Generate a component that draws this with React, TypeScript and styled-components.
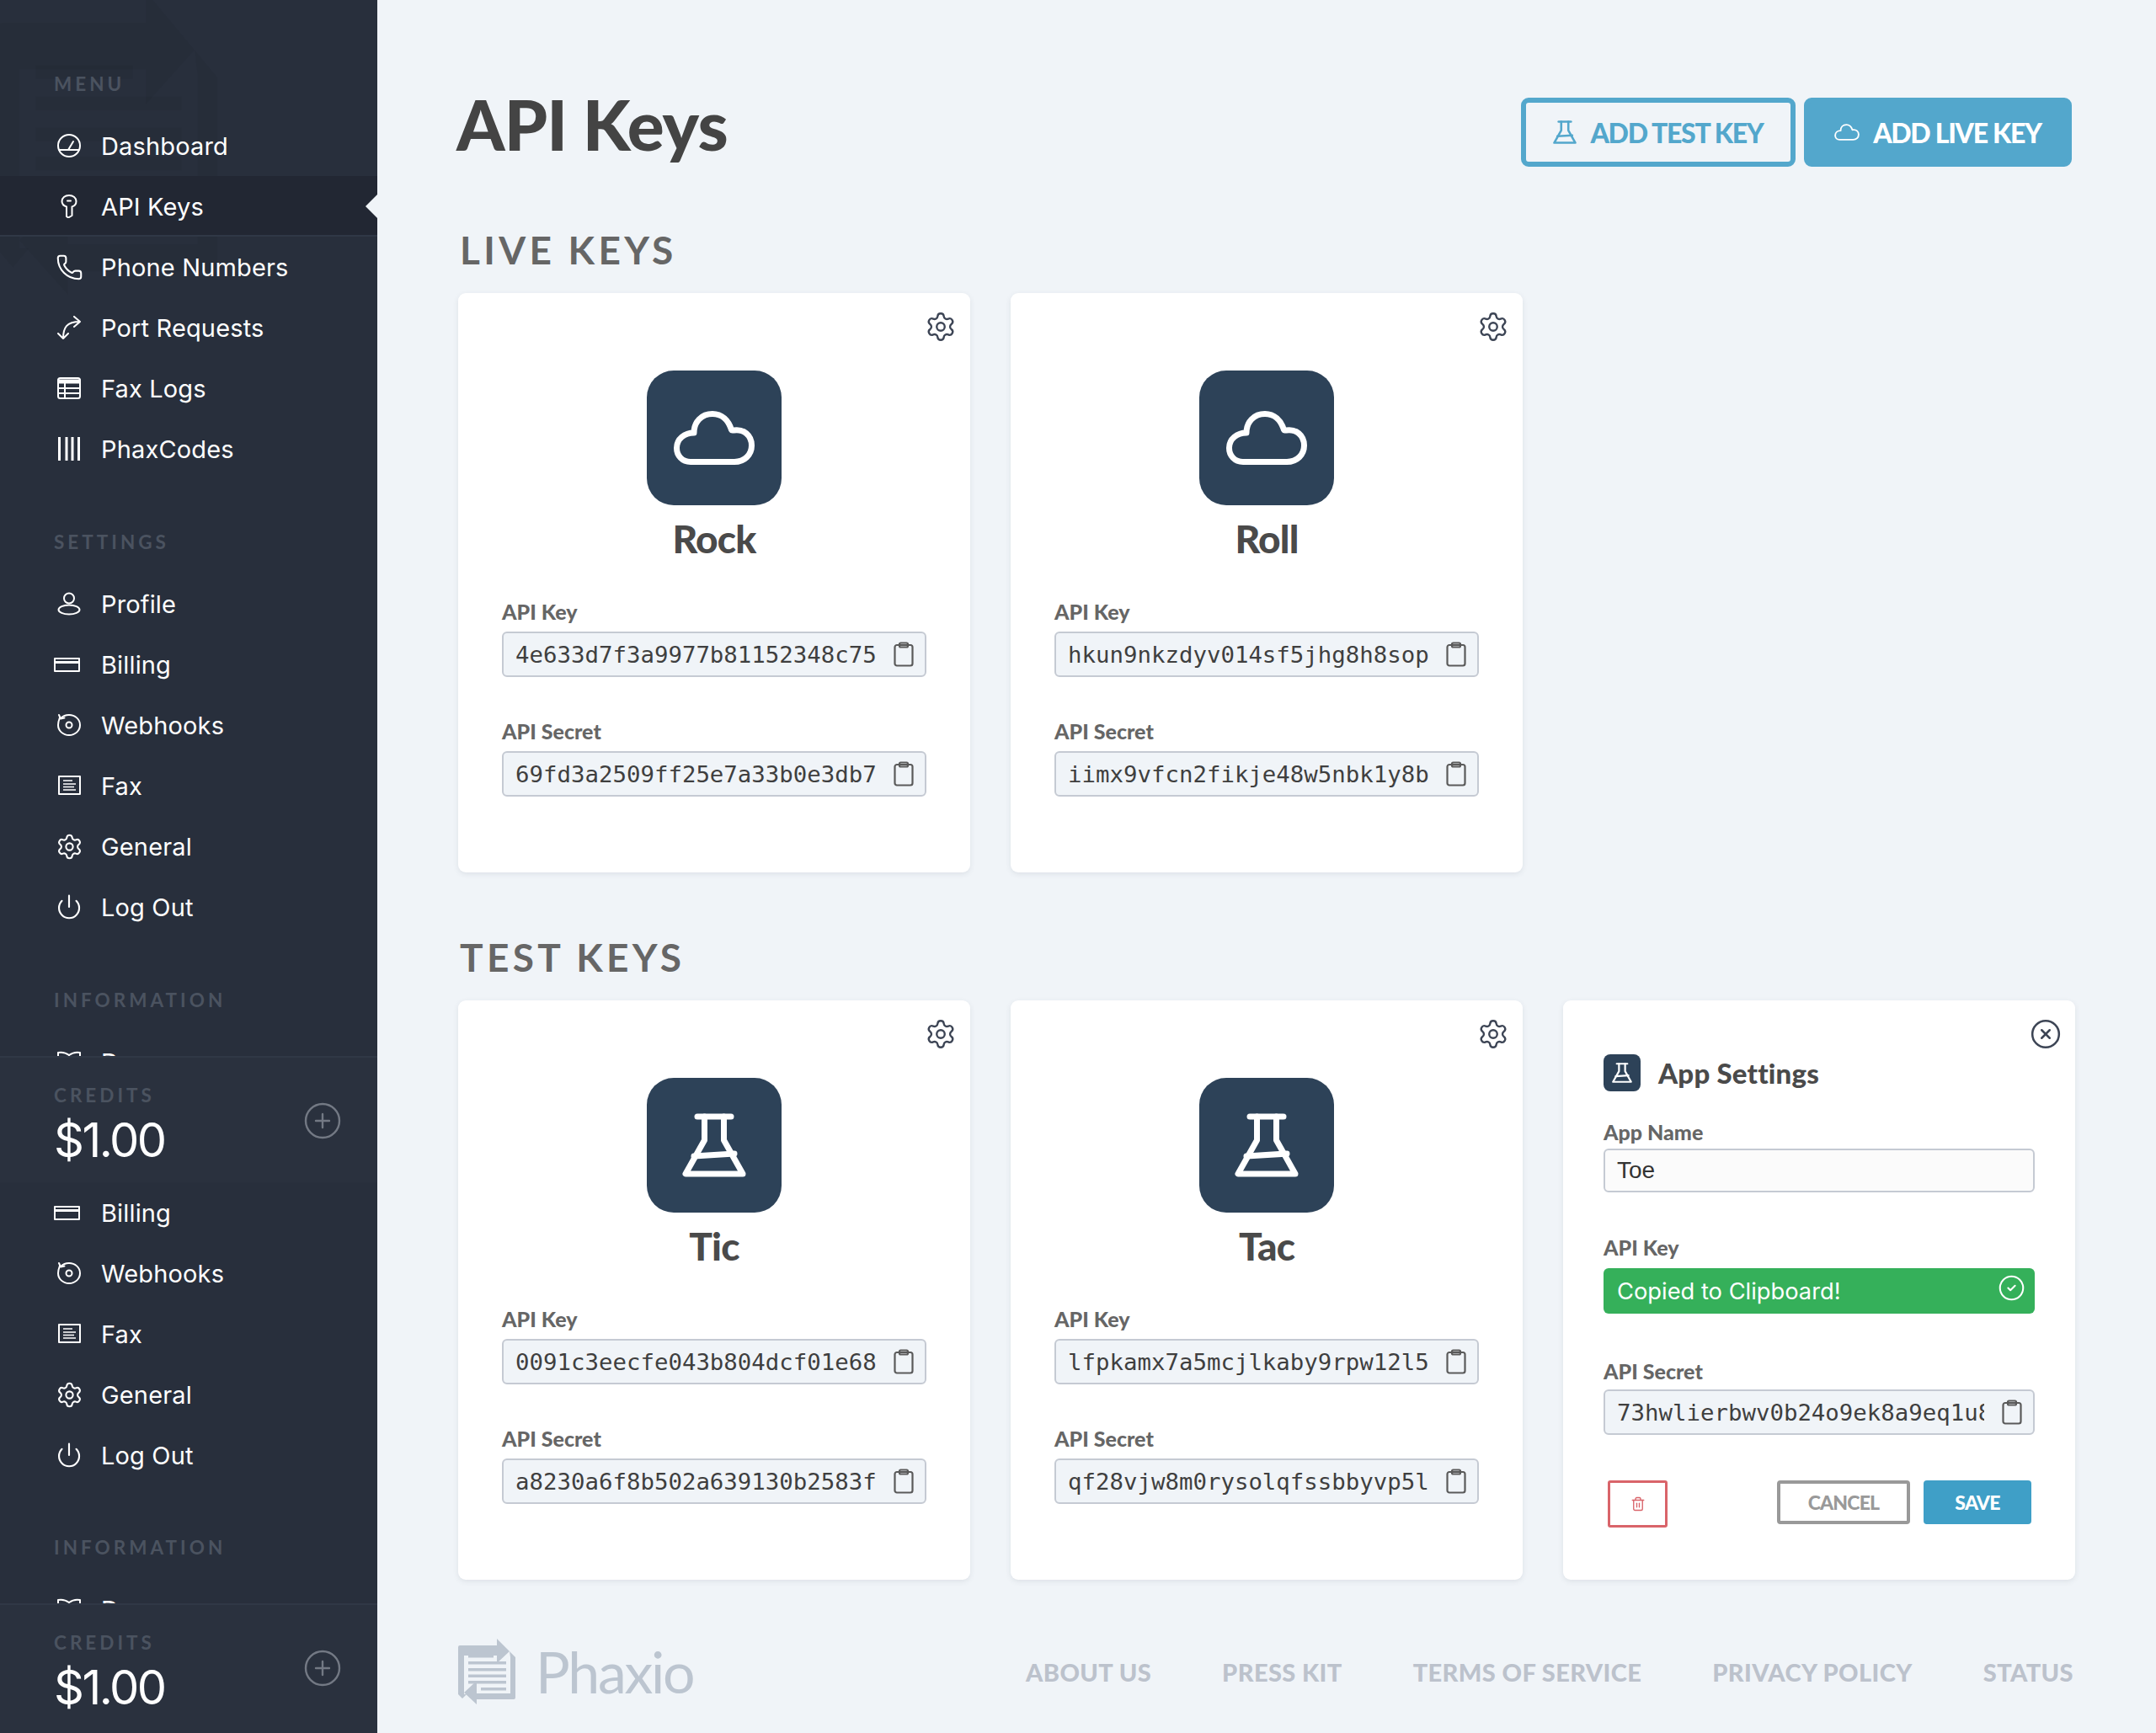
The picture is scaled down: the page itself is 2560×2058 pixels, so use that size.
import React from 'react'
import styled, { createGlobalStyle } from 'styled-components'
import { Settings, Phone, Power, CirclePlus, CircleX, CircleCheck, Trash2 } from 'lucide-react'

const GlobalStyle = createGlobalStyle`
	html, body {
		margin: 0;
		padding: 0;
		background: #f0f4f8;
		overflow: hidden;
	}
	* {
		box-sizing: border-box;
	}
`

const Flask = ({ size }: { size: number }) => (
	<svg width={size} height={size} viewBox="0 0 76 76" fill="none" stroke="currentColor" strokeWidth="7" strokeLinecap="round" strokeLinejoin="round">
		<path d="M18 4h40" />
		<path d="M26.5 4v28L4 72h68L49.5 32V4" />
		<path d="M14 51l48-3" />
	</svg>
)

const Cloud = ({ width, height, stroke = 7 }: { width: number; height: number; stroke?: number }) => (
	<svg width={width} height={height} viewBox="0 0 96 64" fill="none" stroke="currentColor" strokeWidth={stroke} strokeLinejoin="round">
		<path d="M20 60.5h52c12 0 20.500-8.500 20.500-19.500 0-12-9.500-20-21.500-18-1 0-2 .5-2.500-.5C65 11 57 3.500 46 3.500c-13 0-22 9.500-22 22.500-11 0-20.500 7-20.500 18 0 9 6.500 16.500 16.500 16.500z" />
	</svg>
)

const ClipboardIcon = () => (
	<svg width="24" height="30" viewBox="0 0 24 30" fill="none" stroke="#5a5a5a" strokeWidth="2.200" strokeLinejoin="round">
		<rect x="1.500" y="4" width="21" height="24.500" rx="2.500" />
		<rect x="7" y="1.500" width="10" height="5" rx="1.500" />
	</svg>
)

const LogoMark = ({ width, height, color }: { width: number; height: number; color: string }) => (
	<svg width={width} height={height} viewBox="0 0 68 78" preserveAspectRatio="none" fill={color}>
		<path d="M2 8h44V0l15 15-15 14v-9H7v46l3 0-5 5-5-5V10a2 2 0 0 1 2-2z" />
		<path d="M61 15l7 7v48a2 2 0 0 1-2 2H22v6L7 64l15-14v15h40V22z" />
		<rect x="12" y="19" width="30" height="3.500" />
		<rect x="12" y="27" width="45" height="3.500" />
		<rect x="12" y="35" width="45" height="3.500" />
		<rect x="12" y="42.500" width="45" height="3.500" />
		<rect x="12" y="50" width="45" height="3.500" />
		<rect x="27" y="58" width="30" height="3.500" />
	</svg>
)

const navIcon = {
	width: 28,
	height: 28,
	viewBox: '0 0 28 28',
	fill: 'none',
	stroke: 'currentColor',
	strokeWidth: 2,
	strokeLinecap: 'round' as const,
	strokeLinejoin: 'round' as const,
}

const icons: Record<string, React.ReactNode> = {
	dashboard: (
		<svg {...navIcon}>
			<circle cx="14" cy="14" r="13" />
			<path d="M2 19h24M13 19l6-10" />
		</svg>
	),
	key: (
		<svg {...navIcon}>
			<path d="M14 1c5 0 8.500 3 8.500 7 0 3-2 5.500-5 6.500V25l-4.500 2.500-2-1.500V14.500c-3-1-5.500-3.500-5.500-6.500 0-4 3.500-7 8.500-7z" />
			<path d="M12 7.500h4" />
		</svg>
	),
	phone: <Phone size={33} strokeWidth={1.500} />,
	port: (
		<svg {...navIcon}>
			<path d="M7 27C7 14 11 7 27 7M20 1l7 6-7 6M1 21l6 6 6-6" />
		</svg>
	),
	table: (
		<svg {...navIcon}>
			<rect x="1" y="2" width="26" height="24" rx="2.500" />
			<path d="M1 5h26M1 7h26" strokeWidth="3" />
			<path d="M1 14h26M1 20h26M9 8v18" />
		</svg>
	),
	codes: (
		<svg {...navIcon} strokeLinecap="butt" strokeWidth={3}>
			<path d="M2.500 0v28M11 0v28M18 0v28M25.500 0v28" />
		</svg>
	),
	profile: (
		<svg {...navIcon}>
			<circle cx="14" cy="7.500" r="6" />
			<ellipse cx="14" cy="21" rx="12.500" ry="5.500" />
		</svg>
	),
	card: (
		<svg {...navIcon} width={32} viewBox="0 0 32 28" strokeLinecap="butt">
			<rect x="1" y="7" width="29" height="15" />
			<path d="M1 11.500h29" strokeWidth="3" />
		</svg>
	),
	webhook: (
		<svg {...navIcon}>
			<path d="M3 5C1.500 9 1 11 1 14c0 7 6 12 13 12s13-5 13-12S21 2 14 2C10 2 6.500 3.500 4 6" />
			<path d="M2 2l2 4.500 4.500-1" />
			<circle cx="14" cy="14" r="3.500" />
		</svg>
	),
	fax: (
		<svg {...navIcon} strokeLinecap="butt">
			<rect x="2" y="3" width="25" height="21" />
			<path d="M7 8h11M7 12h15M7 15.500h13M7 19h15" strokeWidth="1.600" />
		</svg>
	),
	general: <Settings size={33} strokeWidth={1.500} />,
	power: <Power size={32} strokeWidth={1.600} />,
	book: (
		<svg {...navIcon} strokeLinecap="butt">
			<path d="M1 3c5-1 9 0 13 3 4-3 8-4 13-3v22H1zM14 6v20" />
		</svg>
	),
}

const settingsRows = [
	{ icon: 'profile', label: 'Profile' },
	{ icon: 'card', label: 'Billing' },
	{ icon: 'webhook', label: 'Webhooks' },
	{ icon: 'fax', label: 'Fax' },
	{ icon: 'general', label: 'General' },
	{ icon: 'power', label: 'Log Out' },
]

const NavRows = ({ rows }: { rows: { icon: string; label: string; active?: boolean }[] }) => (
	<>
		{rows.map(row => (
			<NavRow key={row.label} $active={row.active}>
				<NavIcon $wide={row.icon === 'card'}>{icons[row.icon]}</NavIcon>
				{row.label}
			</NavRow>
		))}
	</>
)

const Credits = ({ $tall }: { $tall?: boolean }) => (
	<CreditsPanel $tall={$tall}>
		<NavHeading>CREDITS</NavHeading>
		<Amount>$1.00</Amount>
		<AddCredit>
			<CirclePlus size={48} strokeWidth={1.200} />
		</AddCredit>
	</CreditsPanel>
)

const KeyField = ({ value }: { value: string }) => (
	<Field>
		<FieldText>{value}</FieldText>
		<ClipboardIcon />
	</Field>
)

const KeyCard = ({ name, icon, apiKey, secret }: { name: string; icon: 'cloud' | 'flask'; apiKey: string; secret: string }) => (
	<Card>
		<CardAction>
			<Settings size={38} strokeWidth={1.500} />
		</CardAction>
		<Tile>{icon === 'cloud' ? <Cloud width={96} height={64} /> : <Flask size={76} />}</Tile>
		<CardName>{name}</CardName>
		<KeyLabel>API Key</KeyLabel>
		<KeyField value={apiKey} />
		<KeyLabel $top={48}>API Secret</KeyLabel>
		<KeyField value={secret} />
	</Card>
)

export default function App() {
	return (
		<Shell>
			<GlobalStyle />
			<Sidebar>
				<Watermark>
					<LogoMark width={262} height={360} color="rgba(0, 0, 0, 0.035)" />
				</Watermark>
				<NavBlock $height={1254} $pad={81}>
					<NavHeading>MENU</NavHeading>
					<NavRows
						rows={[
							{ icon: 'dashboard', label: 'Dashboard' },
							{ icon: 'key', label: 'API Keys', active: true },
							{ icon: 'phone', label: 'Phone Numbers' },
							{ icon: 'port', label: 'Port Requests' },
							{ icon: 'table', label: 'Fax Logs' },
							{ icon: 'codes', label: 'PhaxCodes' },
						]}
					/>
					<NavHeading $top={56}>SETTINGS</NavHeading>
					<NavRows rows={settingsRows} />
					<NavHeading $top={56}>INFORMATION</NavHeading>
					<NavRows rows={[{ icon: 'book', label: 'Docs' }]} />
				</NavBlock>
				<Credits />
				<NavBlock $height={500} $pad={0}>
					<NavRows rows={settingsRows.slice(1)} />
					<NavHeading $top={55}>INFORMATION</NavHeading>
					<NavRows rows={[{ icon: 'book', label: 'Docs' }]} />
				</NavBlock>
				<Credits $tall />
			</Sidebar>
			<Main>
				<Header>
					<Title>API Keys</Title>
					<HeaderButtons>
						<HeaderButton>
							<Flask size={28} />
							ADD TEST KEY
						</HeaderButton>
						<HeaderButton $solid>
							<Cloud width={30} height={20} stroke={6} />
							ADD LIVE KEY
						</HeaderButton>
					</HeaderButtons>
				</Header>
				<SectionTitle>LIVE KEYS</SectionTitle>
				<CardGrid>
					<KeyCard name="Rock" icon="cloud" apiKey="4e633d7f3a9977b81152348c75" secret="69fd3a2509ff25e7a33b0e3db7" />
					<KeyCard name="Roll" icon="cloud" apiKey="hkun9nkzdyv014sf5jhg8h8sop" secret="iimx9vfcn2fikje48w5nbk1y8b" />
				</CardGrid>
				<SectionTitle $top={76}>TEST KEYS</SectionTitle>
				<CardGrid>
					<KeyCard name="Tic" icon="flask" apiKey="0091c3eecfe043b804dcf01e68" secret="a8230a6f8b502a639130b2583f" />
					<KeyCard name="Tac" icon="flask" apiKey="lfpkamx7a5mcjlkaby9rpw12l5" secret="qf28vjw8m0rysolqfssbbyvp5l" />
					<SettingsCard>
						<CloseAction>
							<CircleX size={38} strokeWidth={1.600} />
						</CloseAction>
						<SettingsHeader>
							<SmallTile>
								<Flask size={24} />
							</SmallTile>
							<SettingsTitle>App Settings</SettingsTitle>
						</SettingsHeader>
						<KeyLabel $top={32} $bottom={4}>App Name</KeyLabel>
						<NameField>Toe</NameField>
						<KeyLabel $top={49} $bottom={9}>API Key</KeyLabel>
						<CopiedField>
							Copied to Clipboard!
							<CopiedIcon>
								<CircleCheck size={33} strokeWidth={1.500} />
							</CopiedIcon>
						</CopiedField>
						<KeyLabel $top={52} $bottom={6}>API Secret</KeyLabel>
						<Field>
							<FieldText>73hwlierbwv0b24o9ek8a9eq1u8xk2</FieldText>
							<ClipboardIcon />
						</Field>
						<SettingsActions>
							<DeleteButton>
								<Trash2 size={18} strokeWidth={1.800} />
							</DeleteButton>
							<CancelButton>CANCEL</CancelButton>
							<SaveButton>SAVE</SaveButton>
						</SettingsActions>
					</SettingsCard>
				</CardGrid>
				<Footer>
					<LogoLink>
						<LogoMark width={68} height={78} color="#bcc5d0" />
						<LogoText>Phaxio</LogoText>
					</LogoLink>
					<FooterLinks>
						<FooterLink>ABOUT US</FooterLink>
						<FooterLink>PRESS KIT</FooterLink>
						<FooterLink>TERMS OF SERVICE</FooterLink>
						<FooterLink>PRIVACY POLICY</FooterLink>
						<FooterLink>STATUS</FooterLink>
					</FooterLinks>
				</Footer>
			</Main>
		</Shell>
	)
}

const Shell = styled.div`
	display: flex;
	width: 2560px;
	height: 2058px;
	overflow: hidden;
	background: #f0f4f8;
	font-family: Inter, "Liberation Sans", sans-serif;
`

const Sidebar = styled.aside`
	position: relative;
	flex: 0 0 448px;
	height: 2058px;
	overflow: hidden;
	background: #282f3c;
	color: #fff;
`

const Watermark = styled.div`
	position: absolute;
	top: -10px;
	left: -4px;
	pointer-events: none;
`

const NavBlock = styled.div<{ $height: number; $pad: number }>`
	position: relative;
	height: ${p => p.$height}px;
	padding-top: ${p => p.$pad}px;
	overflow: hidden;
`

const NavHeading = styled.div<{ $top?: number }>`
	margin-top: ${p => p.$top ?? 0}px;
	padding-left: 64px;
	height: 56px;
	line-height: 38px;
	font-family: Lato, sans-serif;
	font-weight: 700;
	font-size: 22.500px;
	letter-spacing: 4px;
	color: #4b5360;
`

const NavRow = styled.div<{ $active?: boolean }>`
	position: relative;
	display: flex;
	align-items: center;
	height: 72px;
	padding-left: 64px;
	font-size: 29px;
	letter-spacing: 0.150px;
	background: ${p => (p.$active ? '#222733' : 'transparent')};
	box-shadow: ${p => (p.$active ? 'inset 0 -2px 0 #303846' : 'none')};

	&::after {
		content: '';
		display: ${p => (p.$active ? 'block' : 'none')};
		position: absolute;
		right: 0;
		top: 22px;
		border-top: 14px solid transparent;
		border-bottom: 14px solid transparent;
		border-right: 14px solid #f0f4f8;
	}
`

const NavIcon = styled.span<{ $wide?: boolean }>`
	display: flex;
	justify-content: center;
	width: ${p => (p.$wide ? '32px' : '36px')};
	margin-right: ${p => (p.$wide ? '24px' : '20px')};
`

const CreditsPanel = styled.div<{ $tall?: boolean }>`
	position: relative;
	height: ${p => (p.$tall ? '154px' : '150px')};
	padding-top: 26px;
	background: #2a313e;
	border-top: 2px solid #303846;
`

const Amount = styled.div`
	padding-left: 64px;
	margin-top: -20px;
	font-size: 56px;
	line-height: 72px;
	letter-spacing: -2.500px;
	color: #fff;
`

const AddCredit = styled.span`
	position: absolute;
	top: 51px;
	right: 41px;
	color: #737984;
	display: flex;
`

const Main = styled.main`
	flex: 1;
	padding: 116px 96px 0;
`

const Header = styled.header`
	display: flex;
	justify-content: space-between;
	align-items: flex-start;
	height: 82px;
	padding-right: 4px;
`

const Title = styled.h1`
	margin: -19px 0 0 -2px;
	font-family: Lato, sans-serif;
	font-size: 82px;
	line-height: 100px;
	font-weight: 900;
	letter-spacing: -0.900px;
	color: #444;
`

const HeaderButtons = styled.div`
	display: flex;
	gap: 10px;
`

const HeaderButton = styled.button<{ $solid?: boolean }>`
	display: flex;
	align-items: center;
	justify-content: center;
	gap: 16px;
	width: ${p => (p.$solid ? '318px' : '326px')};
	height: 82px;
	padding: 0;
	border: 6px solid #53a7cc;
	border-radius: 9px;
	background: ${p => (p.$solid ? '#53a7cc' : 'transparent')};
	color: ${p => (p.$solid ? '#fff' : '#53a7cc')};
	font-family: Lato, sans-serif;
	font-weight: 900;
	font-size: 32px;
	letter-spacing: -1.300px;
`

const SectionTitle = styled.h2<{ $top?: number }>`
	margin: ${p => p.$top ?? 74}px 0 0 2px;
	height: 50px;
	font-family: Lato, sans-serif;
	font-size: 46px;
	line-height: 50px;
	font-weight: 700;
	letter-spacing: 4.300px;
	color: #666;
`

const CardGrid = styled.div`
	display: grid;
	grid-template-columns: repeat(3, 608px);
	gap: 48px;
	margin-top: 26px;
`

const Card = styled.section`
	position: relative;
	height: 688px;
	padding: 92px 52px 0;
	background: #fff;
	border-radius: 9px;
	box-shadow: 0 2px 6px rgba(60, 70, 90, 0.1);
`

const CardAction = styled.span`
	position: absolute;
	top: 21px;
	right: 16px;
	display: flex;
	color: #3d4555;
`

const Tile = styled.div`
	display: flex;
	align-items: center;
	justify-content: center;
	width: 160px;
	height: 160px;
	margin: 0 auto;
	border-radius: 32px;
	background: #2d4258;
	color: #fff;
`

const CardName = styled.h3`
	margin: 12px 0 0;
	text-align: center;
	font-family: Lato, sans-serif;
	font-size: 46px;
	line-height: 56px;
	font-weight: 900;
	letter-spacing: -0.800px;
	color: #4a4a4a;
`

const KeyLabel = styled.label<{ $top?: number; $bottom?: number }>`
	display: block;
	margin-top: ${p => p.$top ?? 42}px;
	margin-bottom: ${p => p.$bottom ?? 8}px;
	font-family: Lato, sans-serif;
	font-size: 25px;
	line-height: 32px;
	font-weight: 900;
	letter-spacing: 0;
	color: #666;
`

const Field = styled.div`
	display: flex;
	align-items: center;
	gap: 21px;
	height: 54px;
	padding: 0 13px 0 14px;
	background: #f0f4f8;
	border: 2px solid #c5cad3;
	border-radius: 6px;
`

const FieldText = styled.span`
	flex: 1;
	min-width: 0;
	overflow: hidden;
	white-space: nowrap;
	font-family: "DejaVu Sans Mono", "Liberation Mono", monospace;
	font-size: 27.400px;
	color: #3f3f3f;
`

const SettingsCard = styled(Card)`
	padding: 64px 48px 0;
`

const CloseAction = styled.span`
	position: absolute;
	top: 21px;
	right: 16px;
	display: flex;
	color: #3d4555;
`

const SettingsHeader = styled.div`
	display: flex;
	align-items: center;
	gap: 21px;
`

const SmallTile = styled.div`
	display: flex;
	align-items: center;
	justify-content: center;
	width: 44px;
	height: 44px;
	border-radius: 8px;
	background: #2d4258;
	color: #fff;
`

const SettingsTitle = styled.h3`
	margin: 0;
	font-family: Lato, sans-serif;
	font-size: 33px;
	font-weight: 900;
	letter-spacing: 0.200px;
	color: #4a4a4a;
`

const NameField = styled.div`
	display: flex;
	align-items: center;
	height: 52px;
	padding-left: 14px;
	background: #fbfbfb;
	border: 2px solid #c5cad3;
	border-radius: 6px;
	font-family: "Liberation Sans", sans-serif;
	font-size: 28px;
	color: #333;
`

const CopiedField = styled.div`
	position: relative;
	display: flex;
	align-items: center;
	height: 54px;
	padding-left: 16px;
	background: #35b05a;
	border-radius: 6px;
	font-size: 27.300px;
	color: #fff;
`

const CopiedIcon = styled.span`
	position: absolute;
	top: 7px;
	right: 11px;
	display: flex;
`

const SettingsActions = styled.div`
	display: flex;
	align-items: flex-start;
	gap: 16px;
	margin-top: 54px;
	padding: 0 4px 0 5px;
`

const DeleteButton = styled.button`
	display: flex;
	align-items: center;
	justify-content: center;
	width: 71px;
	height: 56px;
	margin-right: auto;
	padding: 0;
	background: transparent;
	border: 3.500px solid #d9646a;
	border-radius: 3px;
	color: #d9646a;
`

const CancelButton = styled.button`
	width: 158px;
	height: 52px;
	padding: 0;
	background: transparent;
	border: 4px solid #999;
	border-radius: 4px;
	font-family: Lato, sans-serif;
	font-weight: 900;
	font-size: 23px;
	letter-spacing: -0.800px;
	color: #999;
`

const SaveButton = styled.button`
	width: 128px;
	height: 52px;
	padding: 0;
	background: #3f9fc7;
	border: none;
	border-radius: 4px;
	font-family: Lato, sans-serif;
	font-weight: 900;
	font-size: 23px;
	letter-spacing: -0.800px;
	color: #fff;
`

const Footer = styled.footer`
	display: flex;
	align-items: center;
	justify-content: space-between;
	margin-top: 70px;
`

const LogoLink = styled.div`
	display: flex;
	align-items: center;
	gap: 24px;
`

const LogoText = styled.span`
	font-family: Lato, sans-serif;
	font-size: 68px;
	line-height: 78px;
	letter-spacing: -2.300px;
	color: #bcc5d0;
`

const FooterLinks = styled.nav`
	display: flex;
	gap: 84px;
	margin-right: 2px;
`

const FooterLink = styled.span`
	font-family: Lato, sans-serif;
	font-weight: 900;
	font-size: 29px;
	letter-spacing: 0.400px;
	color: #bcc2cc;
`
